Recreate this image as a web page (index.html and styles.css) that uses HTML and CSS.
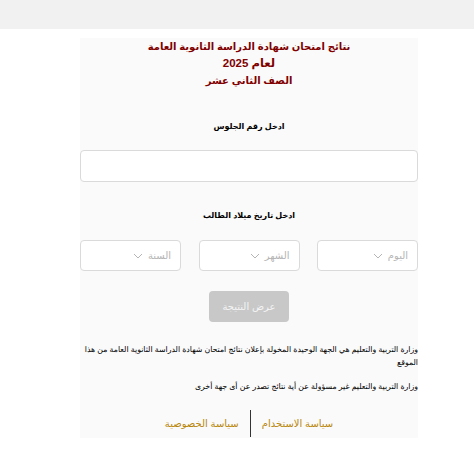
FILE: index.html
```html
<!DOCTYPE html>
<html lang="ar" dir="rtl">
<head>
  <meta charset="UTF-8">
  <meta name="viewport" content="width=device-width, initial-scale=1.0">
  <title>نتائج الثانوية العامة</title>
  <link rel="stylesheet" href="styles.css">
</head>
<body>
  <div class="top-bar"></div>
  <div class="result-panel">
    <div class="result-title">
      <div>نتائج امتحان شهادة الدراسة الثانوية العامة</div>
      <div class="year">لعام 2025</div>
      <div>الصف الثاني عشر</div>
    </div>

    <form class="result-form" id="resultForm">
      <label class="field-label" for="seatNo">ادخل رقم الجلوس</label>
      <input type="text" id="seatNo" class="seat-input">

      <label class="field-label birth-label">ادخل تاريخ ميلاد الطالب</label>
      <div class="date-row">
        <div class="date-select">
          <span>اليوم</span>
          <svg width="10" height="6" viewBox="0 0 10 6"><path d="M1 1 L5 5 L9 1" fill="none" stroke="#b5b5b5" stroke-width="1"/></svg>
        </div>
        <div class="date-select">
          <span>الشهر</span>
          <svg width="10" height="6" viewBox="0 0 10 6"><path d="M1 1 L5 5 L9 1" fill="none" stroke="#b5b5b5" stroke-width="1"/></svg>
        </div>
        <div class="date-select">
          <span>السنة</span>
          <svg width="10" height="6" viewBox="0 0 10 6"><path d="M1 1 L5 5 L9 1" fill="none" stroke="#b5b5b5" stroke-width="1"/></svg>
        </div>
      </div>

      <button type="submit" class="show-btn" disabled>عرض النتيجة</button>
    </form>

    <p class="note first-note">وزارة التربية والتعليم هي الجهة الوحيدة المخولة بإعلان نتائج امتحان شهادة الدراسة الثانوية العامة من هذا الموقع</p>
    <p class="note">وزارة التربية والتعليم غير مسؤولة عن أية نتائج تصدر عن أى جهة أخرى</p>

    <div class="policy-links">
      <a href="#">سياسة الاستخدام</a>
      <span class="divider"></span>
      <a href="#">سياسة الخصوصية</a>
    </div>
  </div>
</body>
</html>
```

FILE: styles.css
```css
body {
  margin: 0;
  font-family: "Liberation Sans", "DejaVu Sans", sans-serif;
  background-color: #fff;
  color: #000;
}
.top-bar {
  height: 29px;
  background-color: #f1f1f1;
}
.result-panel {
  width: 338px;
  margin: 9px auto 0 80px;
  background-color: #fafafa;
  padding-bottom: 1px;
}
.result-title {
  text-align: center;
  color: #800000;
  font-weight: bold;
  font-size: 10px;
  line-height: 17px;
}
.result-title .year {
  font-size: 11.5px;
}
.result-form {
  display: flex;
  flex-direction: column;
  align-items: center;
}
.field-label {
  font-size: 8px;
  font-weight: bold;
  line-height: 14px;
  margin-top: 31px;
}
.birth-label {
  margin-top: 27px;
}
.seat-input {
  box-sizing: border-box;
  width: 100%;
  height: 32px;
  margin-top: 16px;
  border: 1px solid #dadada;
  border-radius: 4px;
  background-color: #fff;
}
.date-row {
  display: flex;
  justify-content: space-between;
  width: 100%;
  margin-top: 17px;
}
.date-select {
  box-sizing: border-box;
  width: 101px;
  height: 31px;
  border: 1px solid #dadada;
  border-radius: 4px;
  background-color: #fff;
  display: flex;
  align-items: center;
  gap: 5px;
  padding-right: 9px;
  font-size: 10px;
  color: #b5b5b5;
}
.show-btn {
  margin-top: 20px;
  width: 80px;
  height: 31px;
  border: none;
  border-radius: 4px;
  background-color: #c8c8c8;
  color: #f4f4f4;
  font-family: inherit;
  font-size: 10px;
}
.note {
  margin: 11px 0 0;
  font-size: 7.8px;
  line-height: 13px;
  text-align: right;
}
.first-note {
  margin-top: 21px;
}
.policy-links {
  display: flex;
  justify-content: center;
  align-items: center;
  margin-top: 17px;
  font-size: 10px;
}
.policy-links a {
  color: #b8860b;
  text-decoration: none;
}
.divider {
  width: 1px;
  height: 27px;
  background-color: #333;
  margin: 0 11px;
}
```
